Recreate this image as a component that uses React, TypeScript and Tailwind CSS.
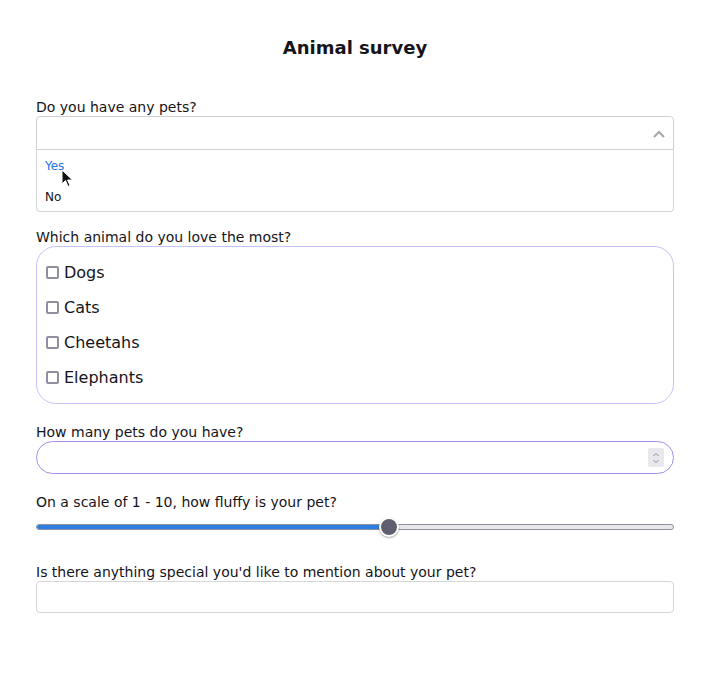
import React from "react";

const animals = ["Dogs", "Cats", "Cheetahs", "Elephants"];

function Checkbox({ label }: { label: string }) {
  return (
    <div className="flex h-[35px] items-center">
      <span className="ml-[9px] h-[13px] w-[13px] rounded-[2px] border-2 border-[#8f8f9d] bg-white"></span>
      <span className="ml-[5px] text-[16px] text-[#15141a]">{label}</span>
    </div>
  );
}

export default function App() {
  return (
    <div
      className="min-h-[684px] bg-white pl-[36px] pr-[38px] pt-[37px] text-[#15141a]"
      style={{ fontFamily: '"DejaVu Sans", Verdana, sans-serif' }}
    >
      <h1 className="text-center text-[18px] font-bold leading-[22px]">Animal survey</h1>

      {/* select (open) */}
      <div className="mt-[40px] text-[14px] leading-[17px]">Do you have any pets?</div>
      <div className="relative">
        <div className="flex h-[34px] items-center justify-end rounded-t-[4px] border border-[#cfcfcf] px-[8px]">
          <svg width="14" height="10" viewBox="0 0 14 10" className="mr-[-1px] mt-[1px]">
            <path d="M2 8 L7 3 L12 8" fill="none" stroke="#a6a6a6" strokeWidth="2" />
          </svg>
        </div>
        <div className="h-[62px] rounded-b-[4px] border border-t-0 border-[#d6d6d6] px-[8px] text-[12px] leading-[14px]">
          <div className="pt-[9px] text-[#1a73e8]">Yes</div>
          <div className="pt-[17px]">No</div>
        </div>
        <svg className="absolute left-[25px] top-[53px]" width="14" height="20" viewBox="0 0 14 20">
          <path d="M1 1 L1 15 L4.5 11.5 L7 17.5 L9 16.6 L6.6 11 L11.5 11 Z" fill="#111" stroke="#fff" strokeWidth="1" />
        </svg>
      </div>

      {/* checkbox group */}
      <div className="mt-[17px] text-[14px] leading-[17px]">Which animal do you love the most?</div>
      <div className="h-[158px] rounded-[20px] border border-[#c5c2f7] py-[8px]">
        {animals.map((a) => (
          <Checkbox key={a} label={a} />
        ))}
      </div>

      {/* number */}
      <div className="mt-[20px] text-[14px] leading-[17px]">How many pets do you have?</div>
      <div className="flex h-[33px] items-center justify-end rounded-full border border-[#a98bf0] pr-[9px]">
        <div className="flex h-[19px] w-[16px] flex-col items-center justify-center rounded-[2px] bg-[#e9e9ed]">
          <svg width="8" height="14" viewBox="0 0 8 14">
            <path d="M1.5 5 L4 2.5 L6.5 5" fill="none" stroke="#8a8a8a" strokeWidth="1" />
            <path d="M1.5 9 L4 11.5 L6.5 9" fill="none" stroke="#8a8a8a" strokeWidth="1" />
          </svg>
        </div>
      </div>

      {/* range */}
      <div className="mt-[20px] text-[14px] leading-[17px]">On a scale of 1 - 10, how fluffy is your pet?</div>
      <div className="relative mt-[6px] flex h-[20px] items-center">
        <div className="flex h-[6px] w-full overflow-hidden rounded-full border border-[#8f8f9d] bg-[#e9e9ed]">
          <div className="h-full bg-[#2f7de0]" style={{ width: `${(353 / 638) * 100}%` }}></div>
        </div>
        <div className="absolute left-[343px] top-0 h-[20px] w-[20px] rounded-full border-2 border-white bg-[#5f5e6e] shadow-[0_1px_2px_rgba(0,0,0,0.35)]"></div>
      </div>

      {/* text */}
      <div className="mt-[27px] text-[14px] leading-[17px]">Is there anything special you'd like to mention about your pet?</div>
      <div className="h-[32px] rounded-[4px] border border-[#d6d6d6]"></div>
    </div>
  );
}
